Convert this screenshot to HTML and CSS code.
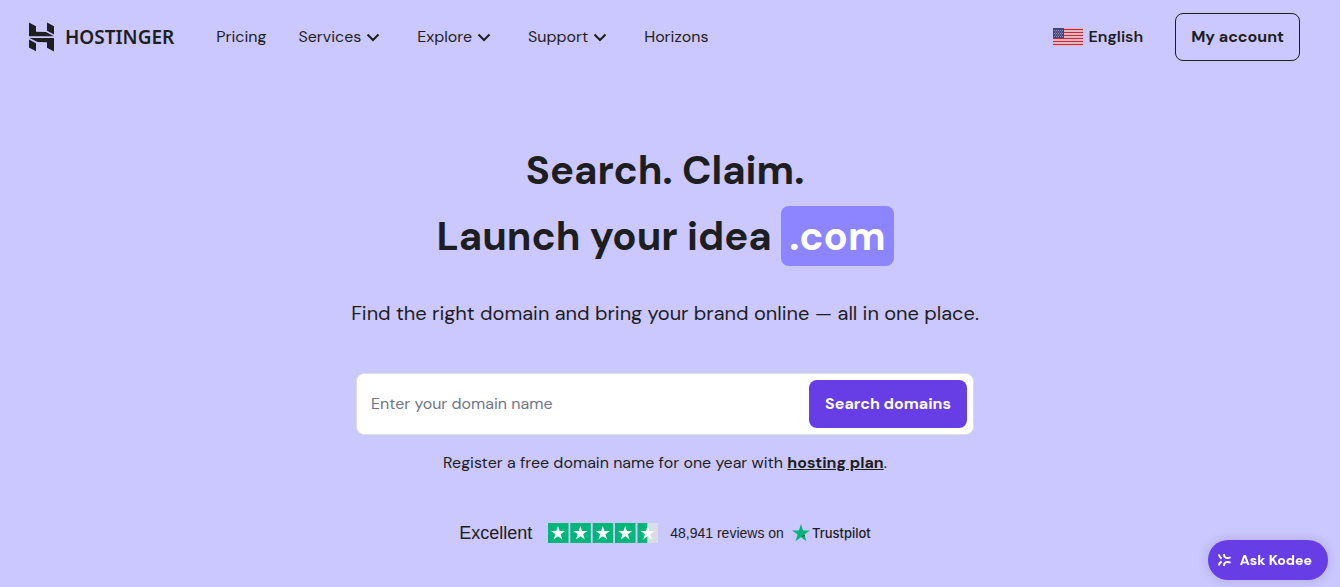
FILE: index.html
```
<!DOCTYPE html>
<html lang="en">
<head>
    <meta charset="UTF-8">
    <meta name="viewport" content="width=device-width, initial-scale=1.0">
    <title>Domain Name Search | Hostinger</title>
    <link rel="stylesheet" href="styles.css">
</head>
<body>
    <header class="header">
        <a class="logo" href="#">
            <svg class="logo-icon" width="26" height="30" viewBox="0 0 26 30" fill="currentColor" aria-hidden="true">
                <path d="M0 0.5 L7 4.3 V9.8 L17 9.9 L25 14.2 H0 Z"/>
                <path d="M18 8.7 V0.5 L25 4.3 V12.4 Z"/>
                <path d="M25 29.5 L18 25.7 V20.2 L8.6 20.1 L0.4 15.9 H25 Z"/>
                <path d="M7 21.3 V29.3 L0 25.6 V17.6 Z"/>
            </svg>
            <span class="logo-text">HOSTINGER</span>
        </a>
        <nav class="nav">
            <a class="nav-link" href="#">Pricing</a>
            <button class="nav-link" type="button">Services
                <svg class="chevron" width="24" height="24" viewBox="0 0 24 24" aria-hidden="true"><path d="M6.5 9.5 L12 15 L17.5 9.5"/></svg>
            </button>
            <button class="nav-link" type="button">Explore
                <svg class="chevron" width="24" height="24" viewBox="0 0 24 24" aria-hidden="true"><path d="M6.5 9.5 L12 15 L17.5 9.5"/></svg>
            </button>
            <button class="nav-link" type="button">Support
                <svg class="chevron" width="24" height="24" viewBox="0 0 24 24" aria-hidden="true"><path d="M6.5 9.5 L12 15 L17.5 9.5"/></svg>
            </button>
            <a class="nav-link" href="#">Horizons</a>
        </nav>
        <div class="header-actions">
            <button class="language" type="button">
                <svg width="30" height="18" viewBox="0 0 30 18" aria-hidden="true">
                    <rect width="30" height="18" fill="#f3e4ec"/>
                    <path d="M0 1.5H30M0 4.5H30M0 7.5H30M0 10.5H30M0 13.5H30M0 16.5H30" stroke="#c02a3c" stroke-width="1.5"/>
                    <rect width="11" height="10" fill="#45447c"/>
                    <path d="M1 2.5H11M1 5.5H11M1 8.5H11" stroke="#8f8eb8" stroke-width="1" stroke-dasharray="1 1"/>
                    <path d="M2 4H10M2 7H10" stroke="#8f8eb8" stroke-width="1" stroke-dasharray="1 1"/>
                </svg>
                English
            </button>
            <a class="account-btn" href="#">My account</a>
        </div>
    </header>

    <main class="hero">
        <h1>Search. Claim.<br>Launch your idea <span class="tld">.com</span></h1>
        <p class="subtitle">Find the right domain and bring your brand online — all in one place.</p>
        <form class="search">
            <input class="search-input" type="text" placeholder="Enter your domain name" aria-label="Enter your domain name">
            <button class="search-btn" type="submit">Search domains</button>
        </form>
        <p class="note">Register a free domain name for one year with <a href="#">hosting plan</a>.</p>

        <a class="trustpilot" href="#">
            <span class="rating">Excellent</span>
            <svg class="stars" width="110" height="20" viewBox="0 0 110 20" role="img" aria-label="4.5 out of 5 stars">
                <defs>
                    <path id="star" d="M10 3 L11.7 8 H17 L12.7 11.2 L14.4 16.5 L10 13.3 L5.6 16.5 L7.3 11.2 L3 8 H8.3 Z"/>
                </defs>
                <path fill="#00b67a" d="M0 0H20.5V20H0ZM22.3 0H42.8V20H22.3ZM44.7 0H65.2V20H44.7ZM67 0H87.5V20H67ZM89.5 0H99.5V20H89.5Z"/>
                <path fill="#dcdce6" d="M99.5 0H110V20H99.5Z"/>
                <g fill="#fff">
                    <use href="#star"/>
                    <use href="#star" x="22.4"/>
                    <use href="#star" x="44.8"/>
                    <use href="#star" x="67.2"/>
                    <use href="#star" x="89.6"/>
                </g>
            </svg>
            <span class="reviews">48,941 reviews on</span>
            <span class="tp-logo">
                <svg width="18" height="18" viewBox="0 0 18 18" aria-hidden="true">
                    <path fill="#00b67a" d="M9 0 L11.1 6.6 H18 L12.4 10.6 L14.5 17.3 L9 13.2 L3.5 17.3 L5.6 10.6 L0 6.6 H6.9 Z"/>
                    <path fill="#005128" d="M12.9 12.1 L12.4 10.6 L9 13.2 Z"/>
                </svg>
                <span class="tp-name">Trustpilot</span>
            </span>
        </a>
    </main>

    <button class="kodee" type="button">
        <svg width="14" height="16" viewBox="0 0 14 16" aria-hidden="true">
            <path d="M1 2.5 Q1.2 5 3.6 6.6 M1 13.5 Q1.2 11 3.6 9.4 M6 2 Q5.8 4.6 7.6 5.6 Q9.4 6.4 12.6 5.4 M6 14 Q5.8 11.4 7.6 10.4 Q9.4 9.6 12.6 10.6"/>
        </svg>
        Ask Kodee
    </button>
</body>
</html>
```
FILE: styles.css
```
* { box-sizing: border-box; }
body {
    margin: 0;
    font-family: "DM Sans", Inter, sans-serif;
    font-size: 16px;
    line-height: 24px;
    color: #1d1e20;
    background-color: #cbc7ff;
}
a { color: inherit; }
button { font: inherit; color: inherit; background: none; border: none; padding: 0; cursor: pointer; }

.header {
    display: flex;
    align-items: center;
    padding: 13px 40px 13px 29px;
}
.logo {
    display: flex;
    align-items: center;
    gap: 10px;
    text-decoration: none;
}
.logo-icon { display: block; }
.logo-text {
    font-family: "Noto Sans", sans-serif;
    font-size: 19px;
    font-weight: 600;
}
.nav {
    display: flex;
    align-items: center;
    gap: 32px;
    margin-left: 42px;
}
.nav-link {
    display: flex;
    align-items: center;
    text-decoration: none;
}
.chevron { fill: none; stroke: currentColor; stroke-width: 2; }
.header-actions {
    display: flex;
    align-items: center;
    gap: 32px;
    margin-left: auto;
}
.language {
    display: flex;
    align-items: center;
    gap: 6px;
    font-weight: 600;
}
.account-btn {
    padding: 11px 15px;
    border: 1px solid #1d1e20;
    border-radius: 8px;
    font-weight: 700;
    text-decoration: none;
}

.hero {
    display: flex;
    flex-direction: column;
    align-items: center;
    padding: 63px 26px 40px 16px;
    text-align: center;
}
h1 {
    margin: 0;
    font-size: 40px;
    font-weight: 700;
    line-height: 66px;
}
.tld {
    display: inline-block;
    padding: 0 8px;
    border-radius: 8px;
    line-height: 60px;
    color: #fff;
    background-color: #8c85ff;
}
.subtitle {
    margin: 28px 0 0;
    font-size: 20px;
    line-height: 32px;
}
.search {
    display: flex;
    width: 100%;
    max-width: 618px;
    margin-top: 44px;
    padding: 6px;
    border: 1px solid #dadce0;
    border-radius: 8px;
    background-color: #fff;
}
.search-input {
    flex: 1;
    min-width: 0;
    padding: 0 8px;
    border: none;
    outline: none;
    font: inherit;
    background: none;
}
.search-input::placeholder { color: #727586; }
.search-btn {
    padding: 12px 16px;
    border-radius: 8px;
    font-weight: 700;
    color: #fff;
    background-color: #673de6;
}
.note { margin: 16px 0 0; }
.note a { font-weight: 700; }

.trustpilot {
    display: flex;
    align-items: center;
    margin-top: 46px;
    font-family: "Liberation Sans", Arial, sans-serif;
    text-decoration: none;
}
.rating { font-size: 18px; }
.stars { margin: 0 12px 0 16px; }
.reviews { font-size: 14px; }
.tp-logo {
    display: flex;
    align-items: center;
    gap: 2px;
    margin-left: 8px;
}
.tp-name {
    font-family: Inter, sans-serif;
    font-size: 13px;
    font-weight: 500;
}

.kodee {
    position: fixed;
    right: 12px;
    bottom: 7px;
    display: flex;
    align-items: center;
    gap: 8px;
    padding: 8px 16px 8px 10px;
    border-radius: 20px;
    font-size: 14px;
    font-weight: 800;
    color: #fff;
    background-color: #673de6;
    box-shadow: 0 0 12px rgba(29, 30, 32, 0.16);
}
.kodee svg { fill: none; stroke: currentColor; stroke-width: 2; }
```
